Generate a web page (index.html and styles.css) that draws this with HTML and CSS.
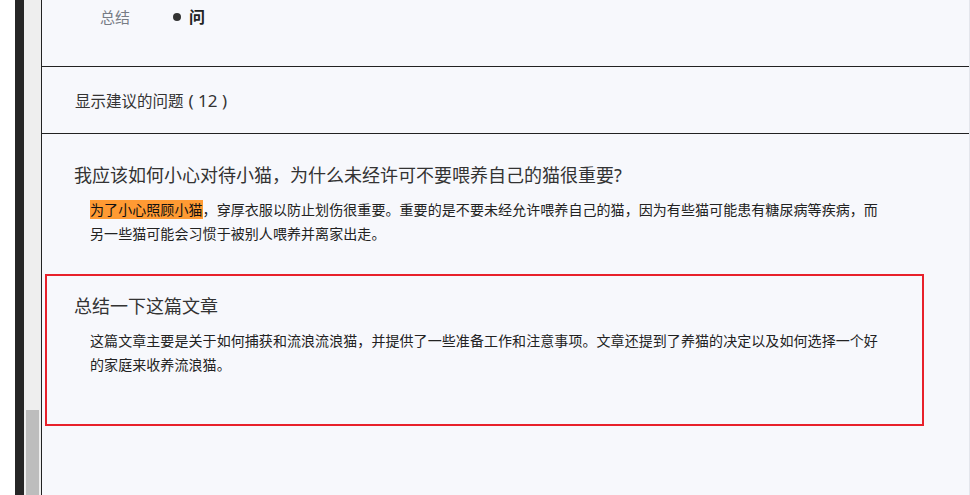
FILE: index.html
```html
<!DOCTYPE html>
<html lang="zh-CN">
<head>
  <meta charset="UTF-8">
  <title>总结</title>
  <link rel="stylesheet" href="styles.css">
</head>
<body>
  <div class="edge"></div>
  <div class="dark-bar"></div>
  <div class="scroll-track">
    <div class="scroll-thumb"></div>
  </div>

  <div class="panel">
    <div class="summary-row">
      <span class="summary-label">总结</span>
      <span class="summary-value"><span class="dot"></span><b>问</b></span>
    </div>

    <div class="suggest-row">显示建议的问题 <span class="count">( 12 )</span></div>

    <div class="qa-list">
      <div class="qa">
        <h2>我应该如何小心对待小猫，为什么未经许可不要喂养自己的猫很重要?</h2>
        <p><mark>为了小心照顾小猫</mark>，穿厚衣服以防止划伤很重要。重要的是不要未经允许喂养自己的猫，因为有些猫可能患有糖尿病等疾病，而另一些猫可能会习惯于被别人喂养并离家出走。</p>
      </div>

      <div class="qa selected">
        <h2>总结一下这篇文章</h2>
        <p>这篇文章主要是关于如何捕获和流浪流浪猫，并提供了一些准备工作和注意事项。文章还提到了养猫的决定以及如何选择一个好的家庭来收养流浪猫。</p>
      </div>
    </div>
  </div>
</body>
</html>
```

FILE: styles.css
```css
body {
  margin: 0;
  height: 495px;
  overflow: hidden;
  display: flex;
  background: #ffffff;
  font-family: "Noto Sans", "Noto Sans CJK SC", sans-serif;
  color: #222;
}

.edge {
  width: 15px;
  background: #ffffff;
}

.dark-bar {
  width: 9px;
  background: #262626;
}

.scroll-track {
  width: 17px;
  background: #eeeeee;
}

.scroll-thumb {
  margin: 410px 0 0 2px;
  width: 13px;
  height: 85px;
  background: #bdbdbd;
}

.panel {
  flex: 1;
  background: #f7f8fc;
  border-left: 1px solid #222;
  border-right: 1px solid #e4e6ec;
}

.summary-row {
  height: 67px;
  display: flex;
  align-items: flex-start;
  padding: 7px 0 0 58px;
  box-sizing: border-box;
  border-bottom: 1px solid #222;
  font-size: 15px;
  line-height: 20px;
}

.summary-label {
  width: 73px;
  color: #777c85;
}

.summary-value {
  display: flex;
  align-items: center;
  gap: 8px;
  font-size: 16px;
  color: #222;
}

.dot {
  width: 8px;
  height: 8px;
  border-radius: 50%;
  background: #333;
}

.suggest-row {
  height: 66px;
  padding-left: 33px;
  display: flex;
  align-items: center;
  gap: 5px;
  border-bottom: 1px solid #222;
  font-size: 15.5px;
  color: #333;
}

.suggest-row .count {
  font-size: 17px;
}

.qa-list {
  padding-top: 9px;
}

.qa {
  margin: 0 45px 0 3px;
  border: 2px solid transparent;
  padding: 17px 0 26px 27px;
}

.qa.selected {
  border-color: #e8212b;
  padding-bottom: 47px;
}

.qa h2 {
  margin: 0 0 10px;
  font-size: 18px;
  line-height: 26px;
  font-weight: normal;
  color: #333;
}

.qa p {
  margin: 0 0 0 16px;
  width: 795px;
  font-size: 14px;
  line-height: 24px;
  letter-spacing: 0.07px;
  color: #222;
}

.qa mark {
  background: #ff9a33;
  color: #111;
}
```
